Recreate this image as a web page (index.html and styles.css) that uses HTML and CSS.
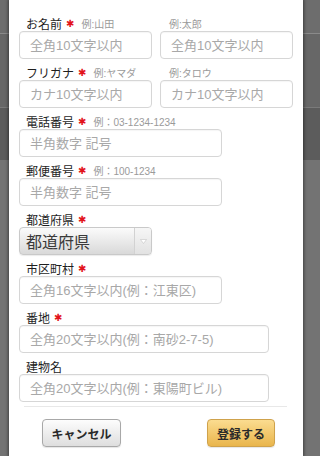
FILE: index.html
```html
<!DOCTYPE html>
<html lang="ja">
<head>
<meta charset="utf-8">
<link rel="stylesheet" href="styles.css">
</head>
<body>
<div class="modal">
  <div class="field">
    <div class="cols">
      <div class="col">
        <div class="label"><span>お名前</span><span class="req">✱</span><span class="ex">例:山田</span></div>
        <input class="w-half" placeholder="全角10文字以内">
      </div>
      <div class="col">
        <div class="label sub"><span class="ex">例:太郎</span></div>
        <input class="w-half" placeholder="全角10文字以内">
      </div>
    </div>
  </div>
  <div class="field">
    <div class="cols">
      <div class="col">
        <div class="label"><span>フリガナ</span><span class="req">✱</span><span class="ex">例:ヤマダ</span></div>
        <input class="w-half" placeholder="カナ10文字以内">
      </div>
      <div class="col">
        <div class="label sub"><span class="ex">例:タロウ</span></div>
        <input class="w-half" placeholder="カナ10文字以内">
      </div>
    </div>
  </div>
  <div class="field">
    <div class="label"><span>電話番号</span><span class="req">✱</span><span class="ex">例：03-1234-1234</span></div>
    <input class="w-mid" placeholder="半角数字 記号">
  </div>
  <div class="field">
    <div class="label"><span>郵便番号</span><span class="req">✱</span><span class="ex">例：100-1234</span></div>
    <input class="w-mid" placeholder="半角数字 記号">
  </div>
  <div class="field">
    <div class="label"><span>都道府県</span><span class="req">✱</span></div>
    <div class="select">
      <span class="select-text">都道府県</span>
      <span class="select-arrow"><svg width="7" height="5" viewBox="0 0 7 5"><path d="M0.5 0.5 H6.5 L3.5 4.5 Z" fill="#ffffff" stroke="#c4c4c4" stroke-width="0.6"/></svg></span>
    </div>
  </div>
  <div class="field">
    <div class="label"><span>市区町村</span><span class="req">✱</span></div>
    <input class="w-mid" placeholder="全角16文字以内(例：江東区)">
  </div>
  <div class="field">
    <div class="label"><span>番地</span><span class="req">✱</span></div>
    <input class="w-wide" placeholder="全角20文字以内(例：南砂2-7-5)">
  </div>
  <div class="field last">
    <div class="label"><span>建物名</span></div>
    <input class="w-wide" placeholder="全角20文字以内(例：東陽町ビル)">
  </div>
  <div class="divider"></div>
  <div class="actions">
    <button class="btn btn-cancel">キャンセル</button>
    <button class="btn btn-submit">登録する</button>
  </div>
</div>
</body>
</html>
```
FILE: styles.css
```css
html, body {
  margin: 0;
  padding: 0;
  height: 100%;
}
body {
  font-family: "Liberation Sans", "Noto Sans CJK JP", sans-serif;
  background: linear-gradient(to bottom,
    #6d6d6d 0, #6d6d6d 33px,
    #8a8a8a 33px, #8a8a8a 34px,
    #676767 34px, #676767 107px,
    #7a7a7a 107px, #7a7a7a 108px,
    #5c5c5c 108px, #5c5c5c 160px,
    #737373 160px);
  overflow: hidden;
}
.modal {
  box-sizing: border-box;
  margin: 0 9px;
  width: 294px;
  min-height: 456px;
  background: #fff;
  padding: 15px 10px 0;
  box-shadow: 0 0 3px 1px rgba(0, 0, 0, 0.45);
}
.field {
  margin-bottom: 5px;
}
.field.last {
  margin-bottom: 4px;
}
.cols {
  display: flex;
  gap: 8px;
}
.label {
  display: flex;
  align-items: center;
  height: 16px;
  padding-left: 7px;
  font-size: 12px;
  color: #1e1e1e;
  white-space: nowrap;
}
.label.sub {
  padding-left: 9px;
}
.req {
  color: #e2141b;
  font-family: "DejaVu Sans", sans-serif;
  font-size: 10px;
  font-weight: bold;
  margin-left: 4px;
  margin-right: 7px;
}
.ex {
  font-size: 10px;
  color: #9a9a9a;
}
input {
  display: block;
  box-sizing: border-box;
  height: 28px;
  margin: 0;
  padding: 0 10px;
  border: 1px solid #d6d6d6;
  border-radius: 4px;
  background: #fff;
  font-family: "Liberation Sans", "Noto Sans CJK JP", sans-serif;
  font-size: 13px;
  color: #333;
  outline: none;
  box-shadow: inset 0 1px 1px rgba(0, 0, 0, 0.04);
}
input::placeholder {
  color: #a8a8a8;
}
.w-half { width: 133px; }
.w-mid { width: 203px; }
.w-wide { width: 250px; }

.select {
  display: flex;
  box-sizing: border-box;
  width: 133px;
  height: 28px;
  border: 1px solid #c9c9c9;
  border-radius: 4px;
  background: linear-gradient(to bottom, #fbfbfb, #d9d9d9);
  box-shadow: 0 1px 1px rgba(0, 0, 0, 0.08);
  overflow: hidden;
}
.select-text {
  flex: 1;
  display: flex;
  align-items: center;
  padding-left: 6px;
  font-size: 16px;
  color: #3a3a3a;
}
.select-arrow {
  width: 16px;
  display: flex;
  align-items: center;
  justify-content: center;
  border-left: 1px solid #d2d2d2;
  background: linear-gradient(to bottom, #f6f6f6, #e2e2e2);
}
.divider {
  height: 1px;
  background: #e8e8e8;
  margin: 0 6px 0 5px;
}
.actions {
  display: flex;
  justify-content: space-between;
  padding: 12px 18px 0 23px;
}
.btn {
  box-sizing: border-box;
  height: 28px;
  padding: 0;
  border-radius: 4px;
  font-family: "Liberation Sans", "Noto Sans CJK JP", sans-serif;
  font-size: 12px;
  font-weight: bold;
  color: #2a2a2a;
  white-space: nowrap;
  text-align: center;
  cursor: pointer;
}
.btn-cancel {
  width: 79px;
  border: 1px solid #a8a8a8;
  background: linear-gradient(to bottom, #fdfdfd, #dedede);
  box-shadow: 0 1px 1px rgba(0, 0, 0, 0.1);
}
.btn-submit {
  width: 68px;
  border: 1px solid #cfa24c;
  background: linear-gradient(to bottom, #fbdc90, #e9b54c);
  box-shadow: 0 1px 1px rgba(0, 0, 0, 0.1);
}
```
